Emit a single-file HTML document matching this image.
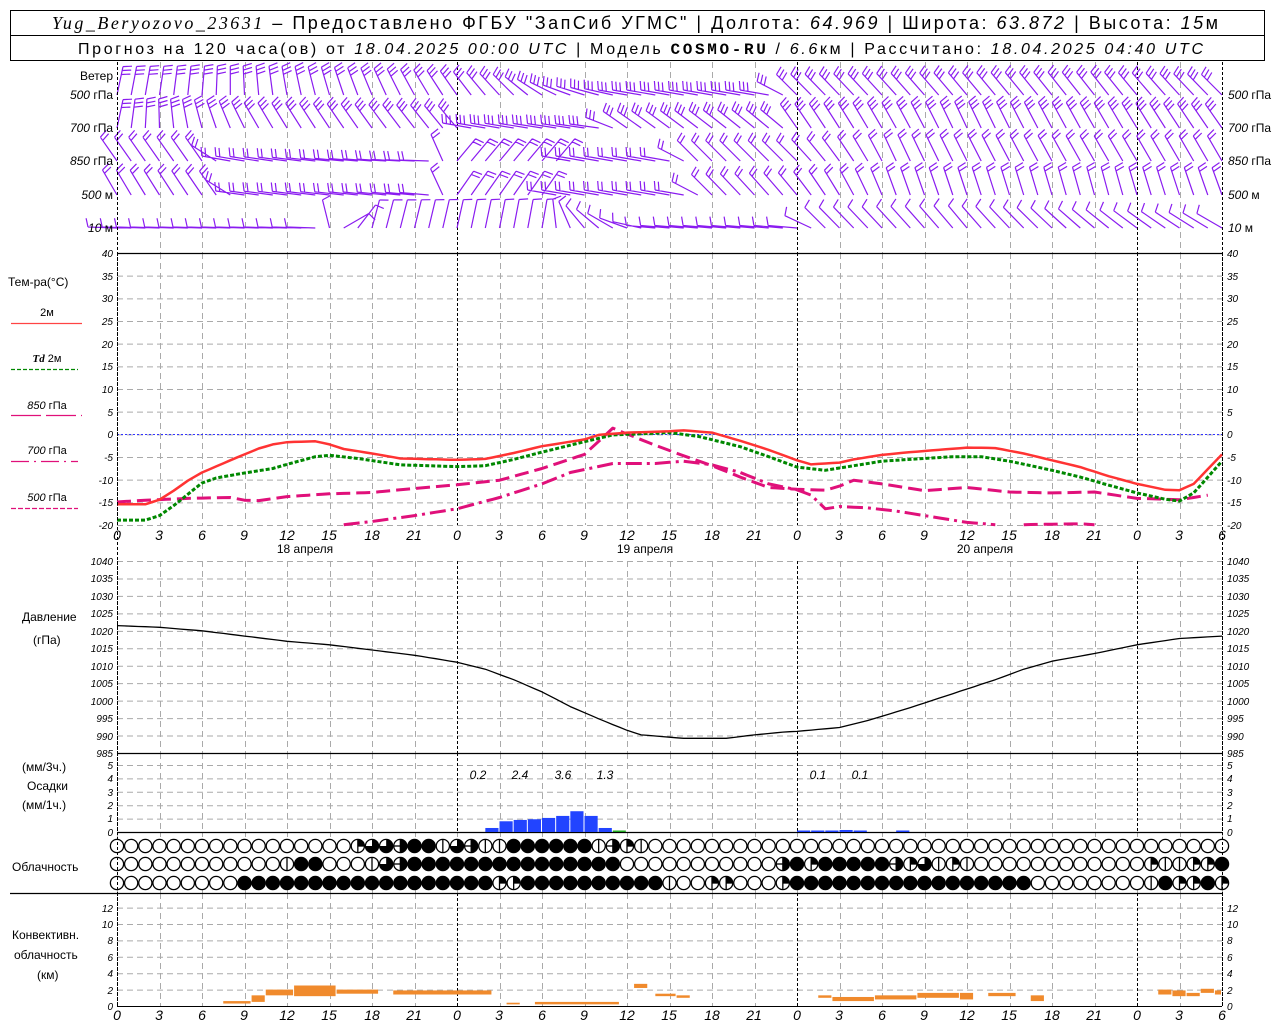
<!DOCTYPE html>
<html><head><meta charset="utf-8">
<style>
html,body{margin:0;padding:0;background:#fff;}
svg{display:block;font-family:"Liberation Sans",sans-serif;}
.it{font-style:italic;}
.ax{font-size:10px;font-style:italic;}
.lb{font-size:12px;}
</style></head><body>
<svg id="s" width="1280" height="1024" viewBox="0 0 1280 1024" xmlns="http://www.w3.org/2000/svg">
<rect x="0" y="0" width="1280" height="1024" fill="#fff"/>
<rect x="10.5" y="10.5" width="1254" height="50" fill="none" stroke="#000"/>
<line x1="10" y1="35.5" x2="1265" y2="35.5" stroke="#000"/>
<text x="52" y="29" font-size="18" textLength="1166" lengthAdjust="spacing"><tspan class="it" font-family="Liberation Serif">Yug_Beryozovo_23631</tspan> – Предоставлено ФГБУ "ЗапСиб УГМС" | Долгота: <tspan class="it">64.969</tspan> | Широта: <tspan class="it">63.872</tspan> | Высота: <tspan class="it">15</tspan>м</text>
<text x="78" y="54" font-size="16" textLength="1125" lengthAdjust="spacing">Прогноз на 120 часа(ов) от <tspan class="it">18.04.2025 00:00 UTC</tspan>  | Модель <tspan font-family="Liberation Mono" font-weight="bold">COSMO-RU</tspan> / <tspan class="it">6.6</tspan>км | Рассчитано: <tspan class="it">18.04.2025 04:40 UTC</tspan></text>

<g id="grid"></g>
<g id="data"></g>

<g class="lb" font-size="11">
<text x="113" y="80" text-anchor="end">Ветер</text>
<text x="113" y="99" text-anchor="end"><tspan class="it">500</tspan> гПа</text>
<text x="113" y="132" text-anchor="end"><tspan class="it">700</tspan> гПа</text>
<text x="113" y="165" text-anchor="end"><tspan class="it">850</tspan> гПа</text>
<text x="113" y="199" text-anchor="end"><tspan class="it">500</tspan>  м</text>
<text x="113" y="232" text-anchor="end"><tspan class="it">10</tspan>    м</text>
<text x="1228" y="99"><tspan class="it">500</tspan> гПа</text>
<text x="1228" y="132"><tspan class="it">700</tspan> гПа</text>
<text x="1228" y="165"><tspan class="it">850</tspan> гПа</text>
<text x="1228" y="199"><tspan class="it">500</tspan>  м</text>
<text x="1228" y="232"><tspan class="it">10</tspan>    м</text>
</g>

<g font-size="12">
<text x="8" y="286">Тем-ра(°C)</text>
<text x="47" y="316" text-anchor="middle" font-size="11">2м</text>
<text x="47" y="362" text-anchor="middle" font-size="11"><tspan class="it" font-weight="bold" font-family="Liberation Serif">Td</tspan>  2м</text>
<text x="47" y="409" text-anchor="middle" font-size="11"><tspan class="it">850</tspan> гПа</text>
<text x="47" y="454" text-anchor="middle" font-size="11"><tspan class="it">700</tspan> гПа</text>
<text x="47" y="501" text-anchor="middle" font-size="11"><tspan class="it">500</tspan> гПа</text>
<text x="22" y="621">Давление</text>
<text x="33" y="644">(гПа)</text>
<text x="22" y="771">(мм/3ч.)</text>
<text x="27" y="790">Осадки</text>
<text x="22" y="809">(мм/1ч.)</text>
<text x="12" y="871">Облачность</text>
<text x="12" y="939">Конвективн.</text>
<text x="14" y="959">облачность</text>
<text x="37" y="979">(км)</text>
</g>
<line x1="11" y1="323.5" x2="82" y2="323.5" stroke="#f44" stroke-width="1.2"/>
<line x1="11" y1="369.5" x2="78" y2="369.5" stroke="#080" stroke-width="1.2" stroke-dasharray="4,2"/>
<line x1="11" y1="415.5" x2="82" y2="415.5" stroke="#e0107a" stroke-width="1.2" stroke-dasharray="30,5"/>
<line x1="11" y1="461.5" x2="78" y2="461.5" stroke="#e0107a" stroke-width="1.2" stroke-dasharray="18,5,2,5"/>
<line x1="11" y1="508.5" x2="78" y2="508.5" stroke="#e0107a" stroke-width="1.2" stroke-dasharray="5,2"/>

<g class="ax" text-anchor="end">
<text x="113" y="257">40</text><text x="113" y="280">35</text><text x="113" y="302">30</text><text x="113" y="325">25</text><text x="113" y="348">20</text><text x="113" y="370">15</text><text x="113" y="393">10</text><text x="113" y="416">5</text><text x="113" y="438">0</text><text x="113" y="461">-5</text><text x="113" y="484">-10</text><text x="113" y="506">-15</text><text x="113" y="529">-20</text>
</g>
<g class="ax">
<text x="1227" y="257">40</text><text x="1227" y="280">35</text><text x="1227" y="302">30</text><text x="1227" y="325">25</text><text x="1227" y="348">20</text><text x="1227" y="370">15</text><text x="1227" y="393">10</text><text x="1227" y="416">5</text><text x="1227" y="438">0</text><text x="1227" y="461">-5</text><text x="1227" y="484">-10</text><text x="1227" y="506">-15</text><text x="1227" y="529">-20</text>
</g>
<g class="ax" text-anchor="end">
<text x="113" y="565">1040</text><text x="113" y="582">1035</text><text x="113" y="600">1030</text><text x="113" y="617">1025</text><text x="113" y="635">1020</text><text x="113" y="652">1015</text><text x="113" y="670">1010</text><text x="113" y="687">1005</text><text x="113" y="705">1000</text><text x="113" y="722">995</text><text x="113" y="740">990</text><text x="113" y="757">985</text>
</g>
<g class="ax">
<text x="1227" y="565">1040</text><text x="1227" y="582">1035</text><text x="1227" y="600">1030</text><text x="1227" y="617">1025</text><text x="1227" y="635">1020</text><text x="1227" y="652">1015</text><text x="1227" y="670">1010</text><text x="1227" y="687">1005</text><text x="1227" y="705">1000</text><text x="1227" y="722">995</text><text x="1227" y="740">990</text><text x="1227" y="757">985</text>
</g>
<g class="ax" text-anchor="end">
<text x="113" y="769">5</text><text x="113" y="782">4</text><text x="113" y="796">3</text><text x="113" y="809">2</text><text x="113" y="822">1</text><text x="113" y="836">0</text>
</g>
<g class="ax">
<text x="1227" y="769">5</text><text x="1227" y="782">4</text><text x="1227" y="796">3</text><text x="1227" y="809">2</text><text x="1227" y="822">1</text><text x="1227" y="836">0</text>
</g>
<g class="it" font-size="12" text-anchor="middle">
<text x="478" y="779">0.2</text><text x="520" y="779">2.4</text><text x="563" y="779">3.6</text><text x="605" y="779">1.3</text><text x="818" y="779">0.1</text><text x="860" y="779">0.1</text>
</g>
<g class="ax" text-anchor="end">
<text x="113" y="912">12</text><text x="113" y="928">10</text><text x="113" y="944">8</text><text x="113" y="961">6</text><text x="113" y="977">4</text><text x="113" y="994">2</text><text x="113" y="1010">0</text>
</g>
<g class="ax">
<text x="1227" y="912">12</text><text x="1227" y="928">10</text><text x="1227" y="944">8</text><text x="1227" y="961">6</text><text x="1227" y="977">4</text><text x="1227" y="994">2</text><text x="1227" y="1010">0</text>
</g>
<g class="it" font-size="14" text-anchor="middle">
<text x="117" y="540">0</text><text x="159" y="540">3</text><text x="202" y="540">6</text><text x="244" y="540">9</text><text x="287" y="540">12</text><text x="329" y="540">15</text><text x="372" y="540">18</text><text x="414" y="540">21</text><text x="457" y="540">0</text><text x="499" y="540">3</text><text x="542" y="540">6</text><text x="584" y="540">9</text><text x="627" y="540">12</text><text x="669" y="540">15</text><text x="712" y="540">18</text><text x="754" y="540">21</text><text x="797" y="540">0</text><text x="839" y="540">3</text><text x="882" y="540">6</text><text x="924" y="540">9</text><text x="967" y="540">12</text><text x="1009" y="540">15</text><text x="1052" y="540">18</text><text x="1094" y="540">21</text><text x="1137" y="540">0</text><text x="1179" y="540">3</text><text x="1222" y="540">6</text>
<text x="117" y="1020">0</text><text x="159" y="1020">3</text><text x="202" y="1020">6</text><text x="244" y="1020">9</text><text x="287" y="1020">12</text><text x="329" y="1020">15</text><text x="372" y="1020">18</text><text x="414" y="1020">21</text><text x="457" y="1020">0</text><text x="499" y="1020">3</text><text x="542" y="1020">6</text><text x="584" y="1020">9</text><text x="627" y="1020">12</text><text x="669" y="1020">15</text><text x="712" y="1020">18</text><text x="754" y="1020">21</text><text x="797" y="1020">0</text><text x="839" y="1020">3</text><text x="882" y="1020">6</text><text x="924" y="1020">9</text><text x="967" y="1020">12</text><text x="1009" y="1020">15</text><text x="1052" y="1020">18</text><text x="1094" y="1020">21</text><text x="1137" y="1020">0</text><text x="1179" y="1020">3</text><text x="1222" y="1020">6</text>
</g>
<g font-size="12" text-anchor="middle">
<text x="305" y="553">18 апреля</text><text x="645" y="553">19 апреля</text><text x="985" y="553">20 апреля</text>
</g>
</svg>
<script>
(function(){
var NS="http://www.w3.org/2000/svg";
var G=document.getElementById("grid"),D=document.getElementById("data");
function el(p,tag,a){var e=document.createElementNS(NS,tag);for(var k in a)e.setAttribute(k,a[k]);p.appendChild(e);return e;}
function X(h){return 117+h*1105/78;}
function line(p,x1,y1,x2,y2,c,w,da){var a={x1:x1,y1:y1,x2:x2,y2:y2,stroke:c,"stroke-width":w||1};if(da)a["stroke-dasharray"]=da;el(p,"line",a);}
function hg(y0,y1,step,n){for(var i=0;i<=n;i++){var y=y0+i*step;line(G,117,y+0.5,1222,y+0.5,"#aaa",1,"6,4");}}
hg(253,525,272/12,12);hg(561,753,192/11,11);
for(var i=0;i<=5;i++){var y=832-i*13.4;line(G,117,y+0.5,1222,y+0.5,"#aaa",1,"6,4");}
for(var i=0;i<=6;i++){var y=1006-i*16.4;line(G,117,y+0.5,1222,y+0.5,"#aaa",1,"6,4");}
var pan=[[62,253],[253,525],[561,753],[753,832],[893,1007]];
for(var h=0;h<=78;h+=3){var x=Math.round(X(h))+0.5;var day=(h%24==0)||h==78;
 pan.forEach(function(p){line(G,x,p[0],x,p[1],day?"#000":"#aaa",1,day?"3,2":"6,4");});
 line(G,x,833,x,837,"#aaa",1);line(G,x,889,x,893,"#aaa",1);}
line(G,117,253.5,1222,253.5,"#000",1.2);
line(G,117,753.5,1222,753.5,"#000",1.2);
line(G,117,832.5,1222,832.5,"#000",1.2);
line(G,10,893.5,1222,893.5,"#000",1.2);
line(G,117,1006.5,1222,1006.5,"#000",1);
line(G,117,434.5,1222,434.5,"#33f",1,"2,2");
function interp(pts,h){for(var i=0;i<pts.length-1;i++){if(h<=pts[i+1][0]){var a=pts[i],b=pts[i+1];return a[1]+(b[1]-a[1])*(h-a[0])/(b[0]-a[0]);}}return pts[pts.length-1][1];}
function curve(pts,fy,c,w,da,h0,h1){var d="";h0=h0==null?pts[0][0]:h0;h1=h1==null?pts[pts.length-1][0]:h1;
 for(var h=h0;h<=h1+0.001;h+=0.5){d+=(d?"L":"M")+X(h).toFixed(1)+","+fy(interp(pts,h)).toFixed(1);}
 var a={d:d,fill:"none",stroke:c,"stroke-width":w,"stroke-linejoin":"round"};if(da)a["stroke-dasharray"]=da;el(D,"path",a);}
function TY(t){return 434-t*4.533;}
var T=[[0,-15.5],[2,-15.5],[3,-14.5],[4,-12.5],[5,-10.3],[6,-8.5],[8,-5.8],[9,-4.5],[10,-3.2],[11,-2.3],[12,-1.8],[14,-1.6],[15,-2.3],[16,-3.3],[18,-4.3],[20,-5.4],[24,-5.7],[26,-5.5],[28,-4.2],[30,-2.7],[33,-1.2],[34,-0.2],[36,0.3],[39,0.6],[40,0.8],[42,0.3],[44,-1.5],[46,-3.5],[48,-5.8],[49,-6.7],[51,-6.3],[52,-5.6],[54,-4.6],[56,-4],[58,-3.5],[60,-3],[62,-3.1],[64,-4.3],[66,-5.8],[68,-7.3],[70,-9.3],[72,-11],[74,-12.3],[75,-12.4],[76,-11],[78,-4.5]];
var Td=[[0,-19],[2,-19],[3,-18],[4,-15.8],[5,-13.3],[6,-10.8],[7,-9.7],[9,-8.6],[11,-7.6],[12,-6.7],[14,-5],[15,-4.7],[17,-5.4],[20,-6.8],[24,-7.2],[26,-7],[28,-5.6],[30,-4],[33,-1.7],[35,-0.2],[39,0.3],[41,-0.5],[44,-2.8],[46,-5],[48,-7.3],[50,-8],[52,-7],[54,-6],[56,-5.6],[59,-5],[61,-5],[63,-6],[66,-8],[68,-9.5],[70,-11.3],[72,-13],[74,-14.4],[75,-14.8],[76,-13],[78,-6]];
var A=[[0,-15],[2,-14.6],[5,-14.2],[8,-14],[9,-14.6],[10,-14.7],[12,-13.8],[15,-13.2],[18,-12.9],[20,-12.3],[24,-11.2],[27,-10.2],[30,-7.6],[33,-4.5],[35,1.3],[36,0],[38,-2.5],[40,-4.8],[42,-7],[44,-9.5],[46,-11.8],[48,-12.2],[50,-12.4],[51,-11.5],[52,-10.2],[54,-11],[57,-12.5],[60,-11.8],[63,-12.8],[66,-13],[69,-12.8],[72,-14.2],[75,-14.5],[77,-13.5]];
var B=[[16,-20],[18,-19.3],[21,-18],[24,-16.5],[27,-14],[30,-11],[32,-8.5],[35,-6.5],[38,-6.5],[40,-6],[42,-6.8],[44,-8.5],[46,-11],[48,-12.3],[49,-13.5],[50,-16.5],[51,-16],[53,-16.3],[55,-17],[58,-18.5],[60,-19.5],[62,-20]];
curve(A,TY,"#e0107a",3,"14,6");
curve(B,TY,"#e0107a",3,"16,5,3,5");
curve(Td,TY,"#080",3,"4,2");
curve(T,TY,"#f33",2.5);
curve([[64,-20],[68,-19.8],[69,-20]],TY,"#e0107a",3,"14,6");
function PY(p){return 561+(1040-p)*3.491;}
var P=[[0,1021.5],[3,1021],[6,1020],[9,1018.5],[12,1017],[15,1016],[18,1014.5],[21,1013],[24,1011],[26,1009],[28,1006],[30,1002.5],[32,998.3],[34,994.8],[36,991.5],[37,990.2],[40,989.2],[43,989.2],[45,990.2],[47,991],[48,991.2],[51,992.3],[53,994.3],[56,998],[59,1002],[62,1006],[64,1009],[66,1011.3],[69,1013.5],[72,1016],[75,1017.8],[78,1018.5]];
curve(P,PY,"#000",1.3);
var pb=[[26,0.3],[27,0.8],[28,0.9],[29,0.95],[30,1.05],[31,1.2],[32,1.55],[33,1.2],[34,0.3]];
pb.forEach(function(b){var x=X(b[0]),w=X(b[0]+1)-x-1,hh=b[1]*13.4;el(D,"rect",{x:x,y:832-hh,width:w,height:hh,fill:"#2244ff"});});
el(D,"rect",{x:X(35),y:830.5,width:13,height:1.5,fill:"#2a2"});
[[48,0.1],[49,0.05],[50,0.05],[51,0.15],[52,0.05],[55,0.05]].forEach(function(b){var x=X(b[0]),w=X(b[0]+1)-x-1,hh=Math.max(1.5,b[1]*13.4);el(D,"rect",{x:x,y:832-hh,width:w,height:hh,fill:"#2244ff"});});
function CY(k){return 1006-k*8.2;}
var cb=[[7.5,9.5,0.3,0.6],[9.5,10.5,0.5,1.3],[10.5,12.5,1.3,2],[12.5,15.5,1.2,2.5],[15.5,18.5,1.5,2],[19.5,26.5,1.4,1.9],[27.5,28.5,0.2,0.4],[29.5,35.5,0.2,0.5],[36.5,37.5,2.2,2.7],[38,39.5,1.2,1.5],[39.5,40.5,1,1.3],[49.5,50.5,1,1.3],[50.5,53.5,0.6,1.1],[53.5,56.5,0.8,1.3],[56.5,59.5,1,1.6],[59.5,60.5,0.8,1.6],[61.5,63.5,1.2,1.6],[64.5,65.5,0.6,1.3],[73.5,74.5,1.4,2],[74.5,75.5,1.2,1.9],[75.5,76.5,1.2,1.6],[76.5,77.5,1.6,2.1],[77.5,78,1.4,1.9]];
cb.forEach(function(b){el(D,"rect",{x:X(b[0]),y:CY(b[3]),width:X(b[1])-X(b[0])-1,height:(b[3]-b[2])*8.2,fill:"#f08a2c"});});
var rows=[
 "o".repeat(17)+"qtt+xxht+hh"+"x".repeat(6)+"h+qh"+"o".repeat(41),
 "o".repeat(12)+"hxx"+"ooo"+"ht+"+"x".repeat(15)+"o".repeat(11)+"+xq"+"xxxxx"+"+qth"+"qh"+"o".repeat(12)+"qhhqqx",
 "o".repeat(9)+"x".repeat(18)+"qq"+"x".repeat(10)+"h"+"oo"+"qq"+"ooo"+"q"+"x".repeat(17)+"o".repeat(8)+"hxqqxq"];
var ry=[846,864,883],r=6.6;
rows.forEach(function(s,ri){for(var h=0;h<79;h++){var c=s[h],cx=X(h),cy=ry[ri];
 el(D,"circle",{cx:cx,cy:cy,r:r,fill:c=="x"?"#000":"#fff",stroke:"#000","stroke-width":1.3});
 if(c=="q"){el(D,"path",{d:"M"+cx+","+cy+"L"+cx+","+(cy-r)+"A"+r+","+r+" 0 0 1 "+(cx+r)+","+cy+"Z",fill:"#000"});line(D,cx,cy-r,cx,cy+r,"#000",1.3);line(D,cx,cy,cx+r,cy,"#000",1.3);}
 else if(c=="t"){el(D,"path",{d:"M"+cx+","+cy+"L"+cx+","+(cy-r)+"A"+r+","+r+" 0 1 1 "+(cx-r)+","+cy+"Z",fill:"#000"});}
 else if(c=="h"){line(D,cx,cy-r,cx,cy+r,"#000",1.3);}
 else if(c=="+"){el(D,"path",{d:"M"+cx+","+(cy-r)+"A"+r+","+r+" 0 0 1 "+cx+","+(cy+r)+"Z",fill:"#000"});line(D,cx-r,cy,cx+r,cy,"#000",1.3);line(D,cx,cy-r,cx,cy+r,"#000",1.3);}
}});
var W=[
 {y:95,n:3,a:[[0,12],[6,5],[12,-10],[24,-35],[28,-45],[32,-70],[36,-80],[46,-80],[48,-45],[60,-40],[70,-38],[78,-45]]},
 {y:128,n:3,a:[[0,12],[6,-15],[10,-30],[24,-40],[25,-80],[34,-82],[36,-55],[47,-50],[48,-35],[60,-25],[70,-30],[78,-35]]},
 {y:161,n:2,a:[[0,-35],[6,-35],[8,-80],[22,-88],[24,40],[31,40],[32,-80],[39,-80],[41,-45],[48,-45],[55,-25],[70,-30],[78,-30]]},
 {y:195,n:2,a:[[0,-30],[7,-35],[9,-82],[22,-85],[24,35],[30,35],[31,-80],[40,-80],[42,-45],[48,-40],[55,-20],[70,-15],[78,-20]]},
 {y:228,n:1,a:[[0,-88],[14,-88],[16,60],[18,15],[30,10],[33,-40],[36,-70],[38,-85],[48,-85],[50,-45],[60,-40],[78,-60]]}];
var wp="";
W.forEach(function(row){for(var h=0;h<=78;h++){var a=interp(row.a,h)*Math.PI/180,bx=X(h),by=row.y,L=29;
 var dx=Math.sin(a),dy=-Math.cos(a);var tx=bx+L*dx,ty=by+L*dy;
 wp+="M"+bx.toFixed(1)+","+by.toFixed(1)+"L"+tx.toFixed(1)+","+ty.toFixed(1);
 var fa=a+Math.PI*0.42,fx=Math.sin(fa)*9,fy=-Math.cos(fa)*9;
 for(var k=0;k<row.n;k++){var px=tx-dx*4*k,py=ty-dy*4*k;wp+="M"+px.toFixed(1)+","+py.toFixed(1)+"l"+fx.toFixed(1)+","+fy.toFixed(1);}
}});
el(D,"path",{d:wp,fill:"none",stroke:"#8a1cf0","stroke-width":1.2});
line(D,117.5,62,117.5,1007,"#000",1,"3,2");
line(D,1222.5,62,1222.5,1007,"#000",1,"3,2");
})();
</script>
</body></html>
